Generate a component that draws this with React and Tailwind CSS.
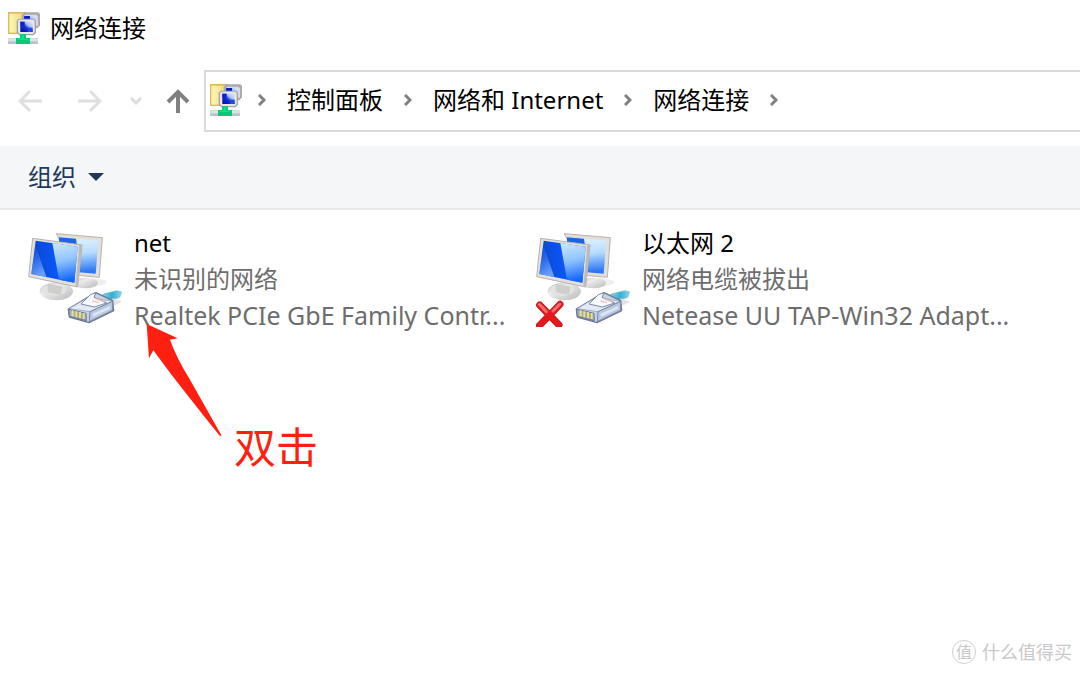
import { useState } from 'react';

const crumbs = ['控制面板', '网络和 Internet', '网络连接'];

const adapters = [
    { name: 'net', status: '未识别的网络', device: 'Realtek PCIe GbE Family Contr...', unplugged: false },
    { name: '以太网 2', status: '网络电缆被拔出', device: 'Netease UU TAP-Win32 Adapt...', unplugged: true },
];

function FolderIcon() {
    return (
        <svg className="h-8 w-8 shrink-0" viewBox="0 0 96 96" aria-hidden="true">
            <defs>
                <linearGradient id="folder" x1="0" y1="0" x2="1" y2="0">
                    <stop offset="0" stopColor="#fff6b5" />
                    <stop offset="1" stopColor="#f0d678" />
                </linearGradient>
                <linearGradient id="miniScreen" x1="0" y1="1" x2="1" y2="0">
                    <stop offset="0.1" stopColor="#0610a8" />
                    <stop offset="0.45" stopColor="#1432d8" />
                    <stop offset="0.65" stopColor="#a9c4fa" />
                    <stop offset="1" stopColor="#dfeaff" />
                </linearGradient>
            </defs>
            <path d="M0 0h54v66H0z" fill="#dfb75c" />
            <path d="M4 5h46v57H4z" fill="url(#folder)" />
            <path d="M48 1h43l5 5v34l-8 9H48l-7-8V10z" fill="#aaa9ad" />
            <path d="M50 8h35l5 5v28H50z" fill="#d9d9df" />
            <path d="M48 12h36v28H48z" fill="url(#miniScreen)" />
            <path d="M50 12h16v10H50z" fill="#0b1bc4" />
            <path d="M72 28h12v12H72z" fill="#1a2fd0" />
            <path d="M32 20h46l6 6v36l-8 8H34l-8-8V26z" fill="#a5a3a7" />
            <path d="M33 23h43l4 5v32l-6 6H35l-5-6V28z" fill="#e9e6e8" />
            <path d="M37 29h37v31H37z" fill="url(#miniScreen)" />
            <path d="M37 29h13v12H37z" fill="#0c22c8" />
            <path d="M60 47h14v13H60z" fill="#2449dc" />
            <path d="M0 78h90v18H0z" fill="#b9c4c9" />
            <path d="M0 79h90v9H0z" fill="#dce3e7" />
            <path d="M36 67h18v11h12v18H24V78h12z" fill="#08c877" />
            <path d="M40 70h8v10h12v4H28v-4h12z" fill="#13df8a" />
        </svg>
    );
}

function AdapterIcon({ unplugged }) {
    return (
        <svg className="h-24 w-24 shrink-0" viewBox="54 30 288 288" aria-hidden="true">
            <defs>
                <linearGradient id="screen" x1="0" y1="0" x2="1" y2="0">
                    <stop offset="0" stopColor="#0b47cf" />
                    <stop offset="0.5" stopColor="#0a55f5" />
                    <stop offset="1" stopColor="#0f62ff" />
                </linearGradient>
                <linearGradient id="glare" x1="0" y1="0" x2="0.15" y2="1">
                    <stop offset="0" stopColor="#cfe8ff" />
                    <stop offset="0.5" stopColor="#8fc3ff" />
                    <stop offset="1" stopColor="#1668fb" />
                </linearGradient>
                <linearGradient id="backGlare" x1="0" y1="0" x2="0.1" y2="1">
                    <stop offset="0" stopColor="#e6f5ff" />
                    <stop offset="0.5" stopColor="#b5dcff" />
                    <stop offset="1" stopColor="#2a77f5" />
                </linearGradient>
                <linearGradient id="sheen" x1="0" y1="0" x2="0.3" y2="1">
                    <stop offset="0" stopColor="#3d84fb" stopOpacity="0" />
                    <stop offset="1" stopColor="#7fb2ff" />
                </linearGradient>
                <linearGradient id="stand" x1="0" y1="0" x2="1" y2="1">
                    <stop offset="0" stopColor="#bdbdbd" />
                    <stop offset="0.35" stopColor="#ececec" />
                    <stop offset="1" stopColor="#b9b9b9" />
                </linearGradient>
                <linearGradient id="cable" x1="0" y1="0" x2="1" y2="0">
                    <stop offset="0" stopColor="#a8e1ef" />
                    <stop offset="0.6" stopColor="#37aecf" />
                    <stop offset="1" stopColor="#8bd8ec" />
                </linearGradient>
            </defs>
            <ellipse cx="240" cy="184" rx="50" ry="12" fill="#efefef" />
            <ellipse cx="226" cy="186" rx="38" ry="16" fill="url(#stand)" />
            <path d="M139 38l138 12-9 119-66-6z" fill="#e2dfda" stroke="#b7b3ac" strokeWidth="3" strokeLinejoin="round" />
            <path d="M147 49l118 10-8 99-50-4z" fill="url(#backGlare)" />
            <path d="M147 49l51 4 3 22-54-6z" fill="#1b63ec" />
            <ellipse cx="139" cy="211" rx="50" ry="27" fill="url(#stand)" />
            <ellipse cx="132" cy="207" rx="36" ry="17" fill="#e3e3e2" />
            <path d="M112 188l45 9-5 24-38-7z" fill="#c4c4c4" opacity=".7" />
            <path d="M68 52l148 20-13 126-147-31z" fill="#e4e1dc" stroke="#b5b2ac" strokeWidth="3" strokeLinejoin="round" />
            <path d="M216 72l-13 126-7-5 12-121z" fill="#bdbbb7" />
            <path d="M77 59l126 18-10 108-129-26z" fill="url(#screen)" />
            <path d="M127 66l76 11-10 108-46-9z" fill="url(#glare)" />
            <path d="M76 72l33 96-45-9z" fill="url(#sheen)" opacity=".8" />
            <path d="M280 219l40-10 15 4-6 16-34 11-31-5z" fill="url(#cable)" stroke="#65bcd4" strokeWidth="2" />
            <path d="M306 232l30 10-22 12z" fill="#dfe2e6" />
            <path d="M175 264l57-34 26-15 50 24 3 30-74 36-59-17z" fill="#c6d2e8" stroke="#6b7891" strokeWidth="4" strokeLinejoin="round" />
            <path d="M177 263l58-34 72 12-66 31z" fill="#e3eaf6" stroke="#8a97ae" strokeWidth="2" />
            <path d="M213 249l28-28 17-6-6 14 38 17-37 12z" fill="#f7faff" stroke="#7c89a1" strokeWidth="3" />
            <path d="M240 272l68-31v27l-70 34z" fill="#b9c7e1" stroke="#7986a0" strokeWidth="3" />
            <path d="M248 278l52-23v8l-52 25z" fill="#dde6f5" />
            <path d="M247 240l20 5M256 233l25 9" stroke="#f0c4ba" strokeWidth="4" />
            <path d="M176 265l52 12 1 22-51-13z" fill="#a3adba" stroke="#6b7891" strokeWidth="3" />
            <path d="M188 268v18M199 271v18M210 273v18M221 276v18" stroke="#e6e08c" strokeWidth="6" />
            <path d="M205 275v13M216 278v13" stroke="#a09c4c" strokeWidth="2" />
            {unplugged && (
                <g strokeLinecap="round" fill="none">
                    <path d="M65 252l58 60M126 250l-62 64" stroke="#c4141a" strokeWidth="21" />
                    <path d="M65 252l58 60M126 250l-62 64" stroke="#e5191d" strokeWidth="17" />
                    <path d="M64 250l21 22M126 249l-21 21" stroke="#f4706e" strokeWidth="9" />
                </g>
            )}
        </svg>
    );
}

function Chevron() {
    return (
        <svg className="h-3 w-2 shrink-0" viewBox="0 0 8 12" fill="none" stroke="#808080" strokeWidth="3" aria-hidden="true">
            <path d="M1 1l5 5-5 5" />
        </svg>
    );
}

export default function App() {
    const [selected, setSelected] = useState(null);

    return (
        <div className="relative flex min-h-screen flex-col overflow-hidden bg-white font-['Noto_Sans','Noto_Sans_CJK_SC',sans-serif] text-2xl text-black">
            <header className="flex h-14 items-center gap-[10px] px-2">
                <FolderIcon />
                <h1 className="leading-8">网络连接</h1>
            </header>

            {/* Navigation + address bar */}
            <nav className="mt-[14px] flex h-[62px] items-center">
                <div className="flex w-[204px] shrink-0 items-center pl-[18px]">
                    <button type="button" aria-label="后退">
                        <svg className="h-6 w-6" viewBox="0 0 24 24" fill="none" stroke="#dfdfdf" strokeWidth="3">
                            <path d="M24 12H3M12 2L2 12l10 10" />
                        </svg>
                    </button>
                    <button type="button" aria-label="前进" className="ml-9">
                        <svg className="h-6 w-6" viewBox="0 0 24 24" fill="none" stroke="#dfdfdf" strokeWidth="3">
                            <path d="M0 12h21M12 2l10 10-10 10" />
                        </svg>
                    </button>
                    <button type="button" aria-label="最近浏览的位置" className="ml-7">
                        <svg className="h-3 w-3" viewBox="0 0 12 12" fill="none" stroke="#dcdcdc" strokeWidth="3">
                            <path d="M1 3l5 5 5-5" />
                        </svg>
                    </button>
                    <button type="button" aria-label="向上" className="ml-6">
                        <svg className="h-6 w-6" viewBox="0 0 24 24" fill="none" stroke="#808080" strokeWidth="4">
                            <path d="M12 24V2M2 13L12 3l10 10" />
                        </svg>
                    </button>
                </div>
                <div className="flex h-full flex-1 items-center border-2 border-r-0 border-[#d9d9d9] pb-[2px] pl-1">
                    <FolderIcon />
                    <ol className="flex items-center gap-[21px] pl-4 whitespace-nowrap">
                        <li className="flex"><Chevron /></li>
                        {crumbs.map((crumb) => (
                            <li key={crumb} className="flex items-center gap-[21px]">
                                <a href="#" className="leading-8">{crumb}</a>
                                <Chevron />
                            </li>
                        ))}
                    </ol>
                </div>
            </nav>

            <div className="mt-[14px] flex h-16 items-center border-b-2 border-[#e6e7e9] bg-[#f4f6f8] px-7">
                <button type="button" className="flex items-center gap-3 leading-8 text-[#1e395b]">
                    组织
                    <svg className="h-2 w-4" viewBox="0 0 16 8" fill="#1e395b" aria-hidden="true">
                        <path d="M0 0h16L8 8z" />
                    </svg>
                </button>
            </div>

            <main className="relative flex-1 px-7 pt-[15px]">
                <div className="grid grid-cols-[repeat(auto-fill,508px)]">
                    {adapters.map((adapter) => (
                        <button
                            key={adapter.name}
                            type="button"
                            aria-pressed={selected === adapter.name}
                            onClick={() => setSelected(adapter.name)}
                            className="flex items-center gap-[10px] text-left leading-9 whitespace-nowrap"
                        >
                            <AdapterIcon unplugged={adapter.unplugged} />
                            <span className="flex flex-col text-[#6d6d6d]">
                                <span className="text-black">{adapter.name}</span>
                                <span>{adapter.status}</span>
                                <span className="text-[25px]">{adapter.device}</span>
                            </span>
                        </button>
                    ))}
                </div>

                {/* Double-click hint */}
                <div className="pointer-events-none absolute top-[114px] left-[146px] flex items-end gap-3 text-[#ff1f10]">
                    <svg className="h-28 w-19 self-start" viewBox="48 42 228 336" fill="currentColor" aria-hidden="true">
                        <path d="M50 42L143 85l-23 4q20 56 60 120l95 168h-6Q188 276 120 188L70 121l-13 24z" />
                    </svg>
                    <span className="mt-24 text-[42px] leading-[54px]">双击</span>
                </div>
            </main>

            {/* Watermark */}
            <div className="absolute right-2 bottom-2 flex items-center gap-[6px] text-[#c8c8c8]">
                <span className="flex h-6 w-6 items-center justify-center rounded-full border border-[#d0d0d0] text-base leading-5">值</span>
                <span className="text-lg leading-7">什么值得买</span>
            </div>
        </div>
    );
}
